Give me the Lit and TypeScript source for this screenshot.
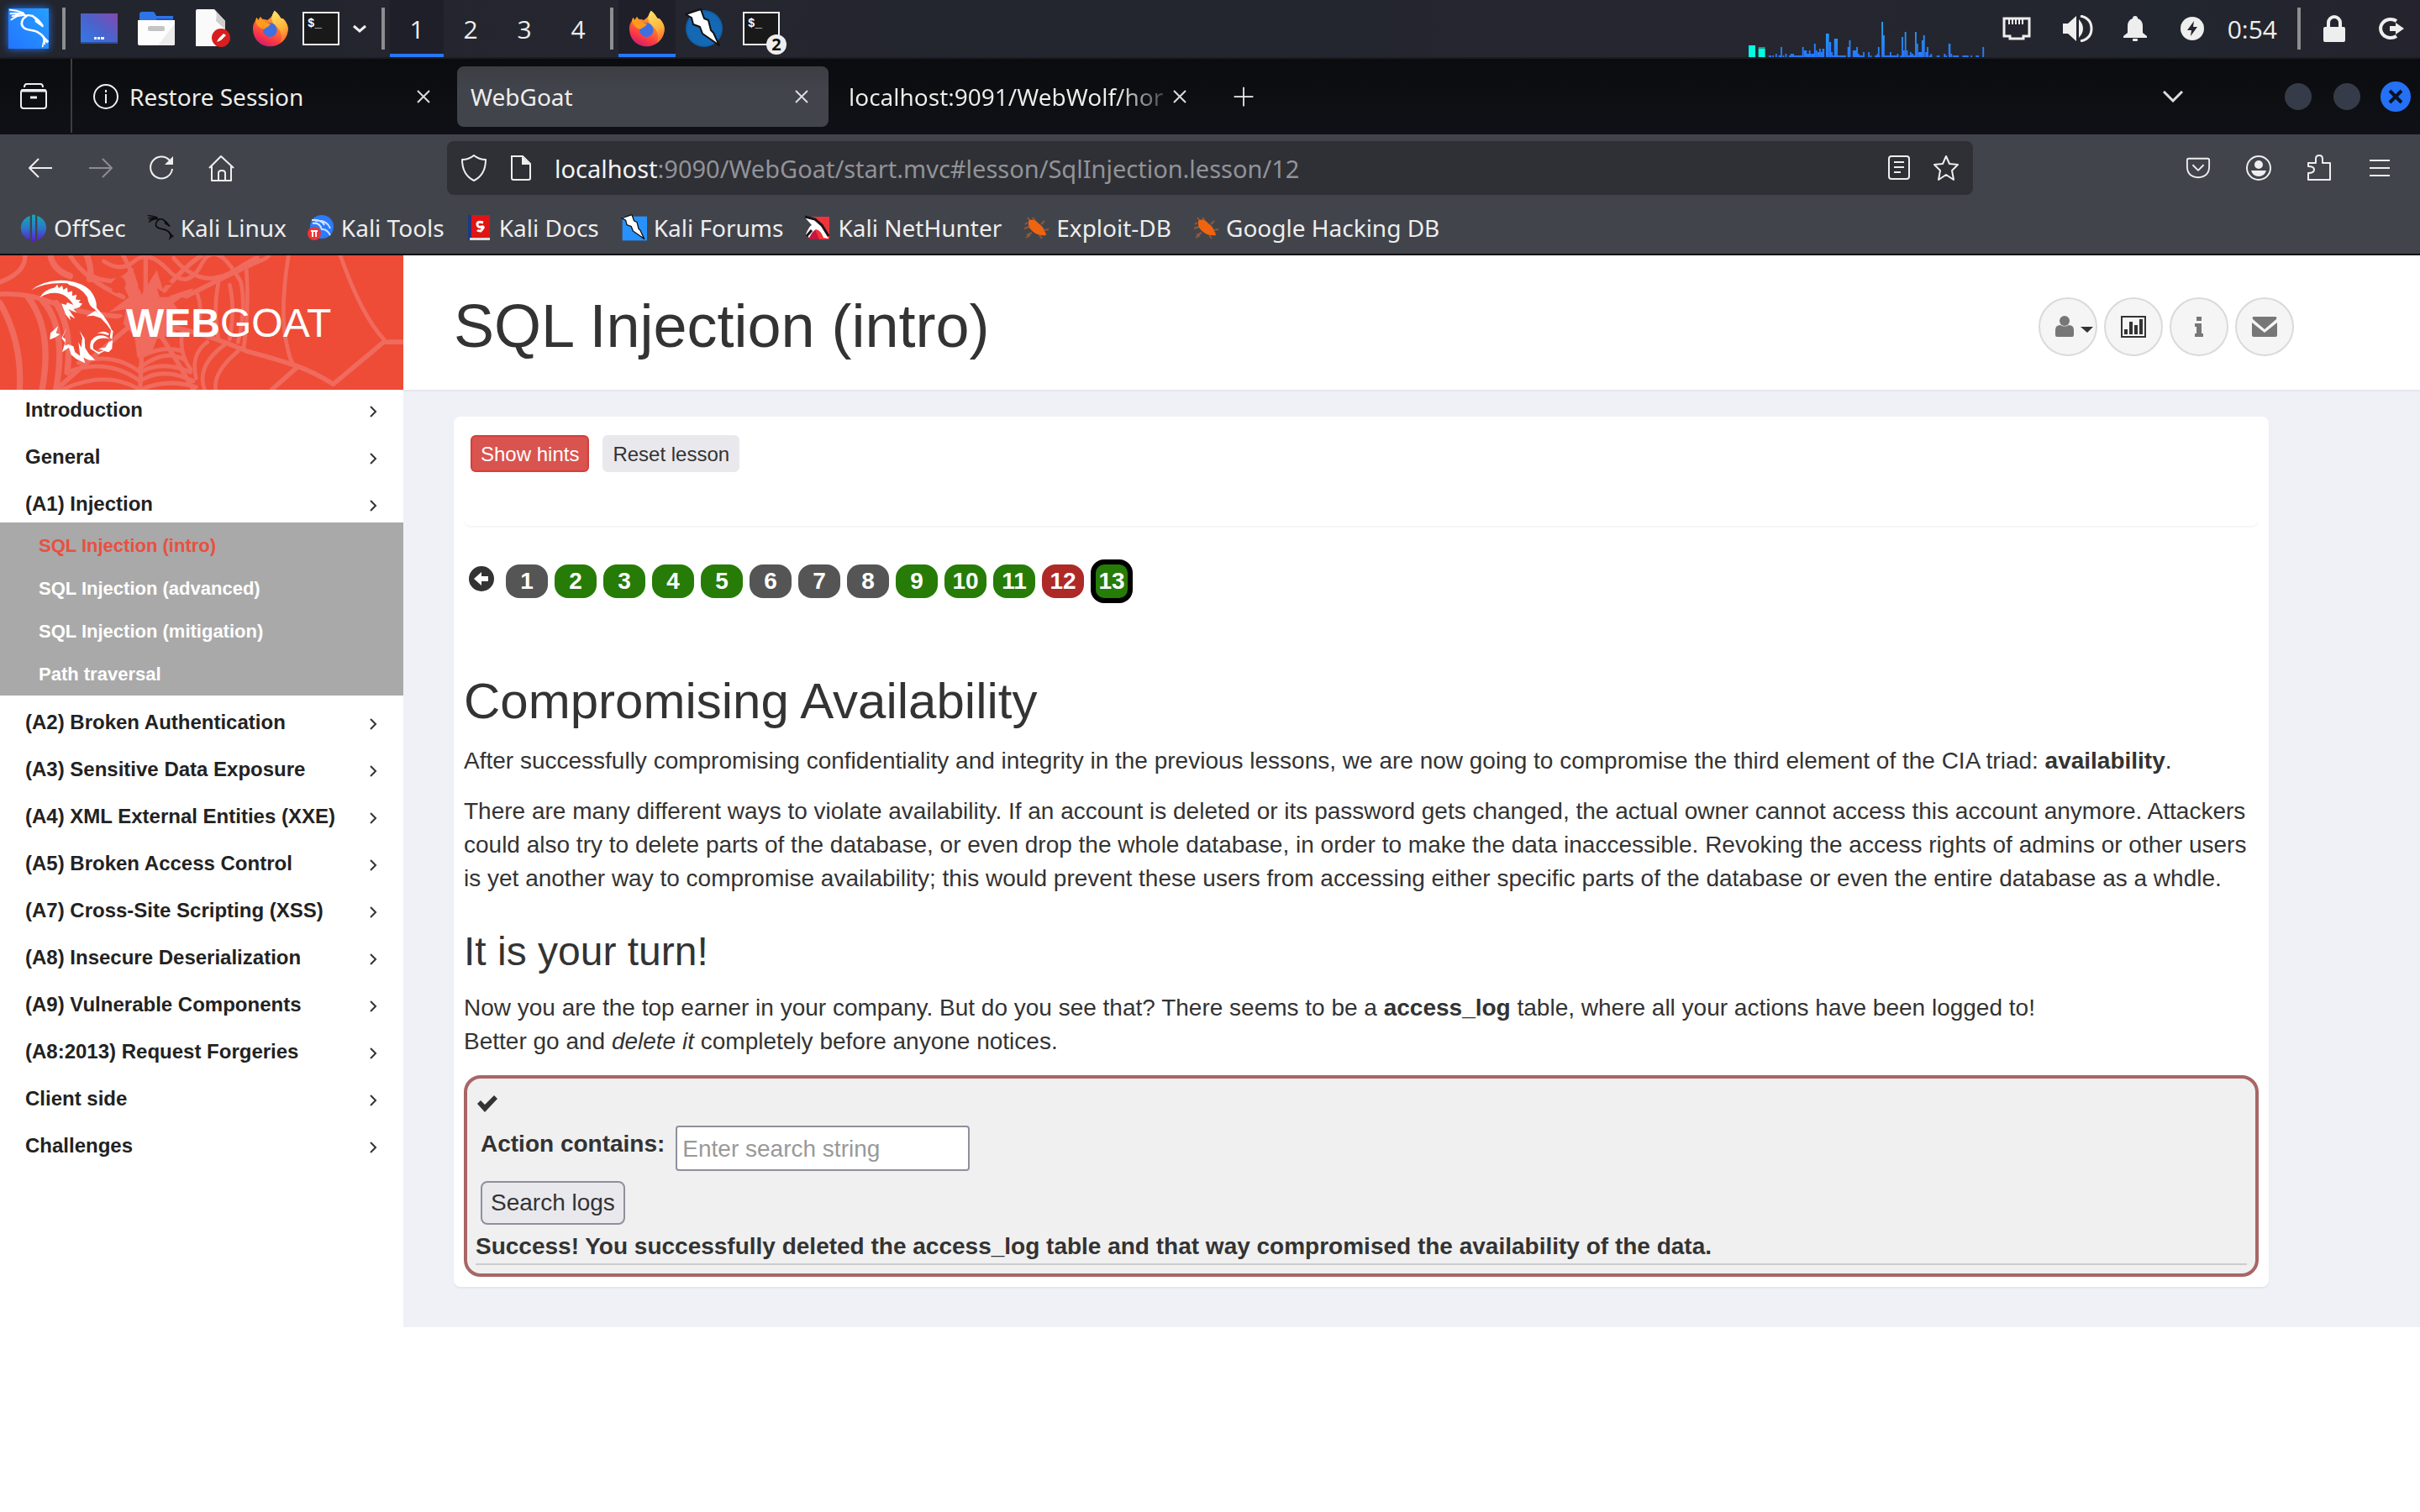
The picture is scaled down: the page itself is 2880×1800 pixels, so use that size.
import { LitElement, html, svg, css, nothing } from "lit";
import { customElement } from "lit/decorators.js";
import { classMap } from "lit/directives/class-map.js";

const dragon = (stroke: string) => svg`
  <g fill="none" stroke=${stroke} stroke-linecap="round" stroke-linejoin="round">
    <path stroke-width="6" d="M36 35 L58 38 L84 46 M38 49 L62 47 L82 50 M40 70 L60 58 L84 54 M44 58 L66 52"/>
    <path stroke-width="7" d="M74 44 L92 56 C110 50 134 62 152 92 M116 56 C124 64 128 68 130 72 C136 78 146 84 152 93 M128 76 L152 93"/>
    <path stroke-width="8" d="M94 58 C78 66 72 86 84 98 C96 110 122 106 136 116 C150 124 156 130 158 140"/>
    <path stroke-width="5" d="M148 124 L172 148 M156 134 L168 152 M158 138 L152 166 M158 138 L160 158"/>
  </g>`;

const flame = svg`
  <g>
    <path fill="url(#ffOuter)" d="M905 104 C904 92 909 80 914 74 L918 62 L924 72 L932 60 L938 68 C946 68 952 70 956 72 C966 66 976 56 982 38 C996 48 1000 58 1006 66 L1012 66 C1024 78 1031 92 1030 106 C1028 142 1000 166 967 166 C934 166 906 142 905 104Z"/>
    <path fill="url(#ffTail)" d="M982 38 C996 48 1000 58 1006 66 L1012 66 C1024 78 1031 92 1030 106 C1029 128 1018 144 1002 154 C1014 130 1004 108 990 96 C978 88 962 66 982 38Z"/>
    <circle cx="966" cy="107" r="25" fill="#3f6fe0"/>
    <path fill="#ff9a1f" d="M914 74 L918 62 L924 72 L932 60 L938 70 C946 78 956 84 968 86 C962 96 952 98 944 104 C930 100 918 92 914 74Z"/>
  </g>`;

const firefoxIcon = svg`
  <svg class="i" viewBox="902 36 132 132" width="44" height="44">
    <defs>
      <linearGradient id="ffOuter" x1="0.8" y1="0" x2="0.3" y2="1">
        <stop offset="0" stop-color="#ffd23c"/><stop offset="0.45" stop-color="#ff7a2a"/>
        <stop offset="0.8" stop-color="#f7324a"/><stop offset="1" stop-color="#c91f6e"/>
      </linearGradient>
      <linearGradient id="ffTail" x1="0.3" y1="0" x2="0.6" y2="1">
        <stop offset="0" stop-color="#ffe066"/><stop offset="0.6" stop-color="#ffb13a"/><stop offset="1" stop-color="#f9662f"/>
      </linearGradient>
    </defs>
    ${flame}
  </svg>`;

const terminalIcon = svg`
  <svg class="i" viewBox="0 0 44 40" width="44" height="40">
    <rect x="1" y="1" width="42" height="38" fill="#191919" stroke="#f4f4f4" stroke-width="2"/>
    <text x="6" y="18" fill="#fff" font-family="Liberation Mono, monospace" font-weight="700" font-size="14">$_</text>
  </svg>`;

const strike = svg`
  <path d="M1 7L19 1L23 12L28 14L31 26L34 29L41 44L21 30L18 22L10 19L8 11Z" fill="#fff" stroke="#111" stroke-width="2" stroke-linejoin="round"/>`;

/* [x, top, width] on a 460 x 126 grid */
const bars: [number, number, number][] = [
  [39, 120, 5], [46, 120, 3], [52, 114, 3], [58, 120, 4], [62, 90, 3], [66, 120, 3], [71, 114, 3], [78, 120, 28],
  [81, 114, 7], [104, 90, 3], [107, 102, 6], [110, 114, 12], [117, 102, 3], [122, 114, 6], [127, 78, 3], [130, 102, 3],
  [133, 108, 4], [137, 96, 3], [140, 108, 4], [143, 96, 4], [150, 42, 6], [156, 72, 4], [160, 108, 3], [166, 60, 7],
  [163, 120, 26], [192, 90, 4], [195, 66, 3], [202, 102, 10], [209, 90, 3], [212, 114, 3], [214, 120, 8], [222, 108, 3],
  [232, 108, 3], [236, 120, 3], [245, 120, 10], [249, 114, 3], [251, 90, 3], [258, 0, 3], [261, 48, 3], [264, 120, 10],
  [274, 108, 3], [277, 120, 14], [288, 114, 3], [294, 120, 4], [297, 54, 3], [300, 102, 3], [303, 36, 3], [306, 102, 3],
  [309, 120, 14], [313, 108, 3], [316, 114, 4], [323, 36, 3], [326, 78, 3], [329, 108, 8], [336, 66, 3], [339, 48, 3],
  [343, 108, 4], [346, 90, 3], [350, 120, 6], [353, 114, 3], [365, 120, 6], [379, 114, 3], [382, 120, 3], [388, 78, 4],
  [392, 114, 3], [396, 120, 12], [415, 120, 12], [431, 120, 3], [441, 120, 6], [454, 90, 3],
];

@customElement("desktop-panel")
class DesktopPanel extends LitElement {
  static styles = css`
    :host { display: block; }
    .panel { display: flex; align-items: center; height: 68px; border-bottom: 2px solid #1c1d20; color: #eeeeec;
      background: linear-gradient(90deg, #22252d, #25262f 25%, #23262e 50%, #262630 70%, #22262e 90%, #25242e);
      font: 30px "Open Sans", "Noto Sans", sans-serif; }
    .cell { display: flex; align-items: center; justify-content: center; width: 68px; height: 68px; padding: 0;
      border: 0; background: none; color: inherit; font: inherit; box-sizing: border-box; position: relative; flex: none; }
    .narrow { width: 52px; }
    .slim { width: 40px; }
    .ws { width: 64px; }
    .on { background: #1e1f28; box-shadow: inset 0 -4px #2777ff; }
    .sep { width: 4px; height: 50px; margin: 0 6px; background: #8d8e90; flex: none; }
    .space { flex: 1; }
    .kali { filter: drop-shadow(0 0 5px #2777ff); }
    .count { position: absolute; left: 40px; top: 41px; width: 24px; height: 24px; border-radius: 12px; background: #eee;
      color: #111; font: 700 20px/24px "Open Sans", sans-serif; text-align: center; }
    .clock { padding: 0 18px 0 8px; flex: none; }
    .graph { align-self: flex-end; flex: none; }
    .net { width: 76px; padding-right: 2px; }
    .i { display: block; }
  `;

  render() {
    return html`<header class="panel">
      <button class="cell" aria-label="Applications">
        <svg class="kali" viewBox="30 30 144 144" width="48" height="48">
          <defs><linearGradient id="kg" x1="0" y1="1" x2="1" y2="0"><stop offset="0" stop-color="#2474ff"/><stop offset="1" stop-color="#25a0ff"/></linearGradient></defs>
          <rect x="30" y="30" width="144" height="144" fill="url(#kg)"/>${dragon("#fff")}
        </svg>
      </button>
      <span class="sep"></span>
      <button class="cell" aria-label="Show desktop">
        <svg class="i" viewBox="0 0 44 36" width="44" height="36">
          <defs><linearGradient id="dg" x1="0" y1="1" x2="1" y2="0"><stop offset="0" stop-color="#2f7bea"/><stop offset="0.5" stop-color="#4a63cc"/><stop offset="1" stop-color="#8448b0"/></linearGradient></defs>
          <rect width="44" height="36" fill="url(#dg)"/><rect y="34" width="44" height="2" fill="#2b4f9c"/>
          <path d="M16 28h3v3h-3zM20 28h3v3h-3zM24 28h4v3h-4z" fill="#f2f2ff"/>
        </svg>
      </button>
      <button class="cell" aria-label="Files">
        <svg class="i" viewBox="0 0 44 40" width="44" height="40">
          <path d="M2 12V3q0-3 3-3H18q2 0 3 3l1 2H42v7z" fill="#2f74e6"/><path d="M22 8H42v2H22z" fill="#1f57b8"/>
          <path d="M0 10H44V38q0 2-2 2H2q-2 0-2-2z" fill="#fdfdfd"/><path d="M44 14V38q0 2-2 2H24z" fill="#ececec"/>
          <rect x="12" y="17" width="20" height="6" rx="2" fill="#c4c4c4"/>
        </svg>
      </button>
      <button class="cell" aria-label="Text editor">
        <svg class="i" viewBox="0 0 42 46" width="42" height="46">
          <path d="M2 0H22L35 14V42q0 2-2 2H0V2q0-2 2-2z" fill="#fafafa"/><path d="M22 0L35 14V24L24 14Q26 4 22 0z" fill="#cfcfcf"/>
          <circle cx="30" cy="34" r="11" fill="#d81e1e"/><path d="M25 39L27 35L33 29L36 31L30 37z" fill="#fff"/>
        </svg>
      </button>
      <button class="cell" aria-label="Firefox">${firefoxIcon}</button>
      <button class="cell narrow" aria-label="Terminal">${terminalIcon}</button>
      <button class="cell slim" aria-label="More launchers">
        <svg class="i" viewBox="0 0 16 10" width="16" height="10"><path d="M1 2L8 8L15 2" fill="none" stroke="#eee" stroke-width="3"/></svg>
      </button>
      <span class="sep"></span>
      ${[1, 2, 3, 4].map((n) => html`<button class=${classMap({ cell: true, ws: true, on: n === 1 })}>${n}</button>`)}
      <span class="sep"></span>
      <button class="cell on" aria-label="Firefox window">${firefoxIcon}</button>
      <button class="cell" aria-label="ZAP window">
        <svg class="i" viewBox="0 0 46 48" width="46" height="48">
          <circle cx="23" cy="24" r="22" fill="#1060a8"/><circle cx="23" cy="24" r="20" fill="#1568b4"/>${strike}
        </svg>
      </button>
      <button class="cell" aria-label="Terminal windows">${terminalIcon}<span class="count">2</span></button>
      <span class="space"></span>
      <svg class="graph" viewBox="0 0 460 126" preserveAspectRatio="none" width="282" height="42">
        <defs><linearGradient id="bg" gradientUnits="userSpaceOnUse" x1="0" y1="0" x2="0" y2="126"><stop offset="0" stop-color="#24a8f0"/><stop offset="1" stop-color="#2777ff"/></linearGradient></defs>
        <rect x="0" y="84" width="13" height="42" fill="#00ffe0"/><rect x="19" y="90" width="13" height="6" fill="#1a9a90"/><rect x="19" y="96" width="13" height="30" fill="#00ffe0"/>
        ${bars.map(([x, y, w]) => svg`<rect x=${x} y=${y} width=${w} height=${126 - y} fill="url(#bg)"/>`)}
      </svg>
      <button class="cell net" aria-label="Network">
        <svg class="i" viewBox="0 0 34 28" width="34" height="28"><path d="M2 2H32V23H25V26H9V23H2z" fill="none" stroke="#eee" stroke-width="3"/><path d="M8 3v6M12 3v6M16 3v6M20 3v6M24 3v6" stroke="#eee" stroke-width="2"/></svg>
      </button>
      <button class="cell" aria-label="Volume">
        <svg class="i" viewBox="0 0 36 32" width="36" height="32"><path d="M0 10H6L16 1V31L6 22H0z" fill="#eee"/><path d="M19 5q10 11 0 22z" fill="#eee"/><path d="M21 1q13 3 13 15t-13 15" fill="none" stroke="#eee" stroke-width="3"/></svg>
      </button>
      <button class="cell" aria-label="Notifications">
        <svg class="i" viewBox="0 0 28 30" width="28" height="30"><path d="M14 0q3 0 3 3q6 2 6 9v8l5 4v2H0v-2l5-4v-8q0-7 6-9q0-3 3-3z" fill="#eee"/><rect x="11" y="27" width="6" height="3" rx="1" fill="#eee"/></svg>
      </button>
      <button class="cell" aria-label="Power">
        <svg class="i" viewBox="0 0 28 28" width="28" height="28"><circle cx="14" cy="14" r="14" fill="#eee"/><path d="M16 5L8 16H13L12 23L20 12H15z" fill="#23262e"/></svg>
      </button>
      <span class="clock">0:54</span>
      <span class="sep"></span>
      <button class="cell" aria-label="Lock">
        <svg class="i" viewBox="0 0 26 32" width="26" height="32"><path d="M6 16V9a7 7 0 0 1 14 0V16" fill="none" stroke="#eee" stroke-width="4"/><rect y="14" width="26" height="18" rx="2" fill="#eee"/></svg>
      </button>
      <button class="cell" aria-label="Log out">
        <svg class="i" viewBox="0 0 30 28" width="30" height="28"><path d="M21 5a12 11 0 1 0 0 18" fill="none" stroke="#eee" stroke-width="4"/><path d="M13 11H20V7L30 14L20 21V17H13z" fill="#eee"/></svg>
      </button>
    </header>`;
  }
}

const closeIcon = svg`<svg class="i" viewBox="0 0 18 16" width="18" height="16"><path d="M2 1L16 15M16 1L2 15" stroke="#ddd" stroke-width="2"/></svg>`;
const bugIcon = svg`
  <svg class="i" viewBox="0 0 32 32" width="32" height="32">
    <path d="M9 8L6 4M15 8L12 4M22 12L26 8M26 19L31 18M8 15L2 17M11 22L5 25M20 25L23 29M9 25L4 28M6 10L3 12" stroke="#8f5a3a" stroke-width="2"/>
    <path d="M8 7q6-2 11 4q6 4 7 9q2 2 2 5q-8 1-14-3q-7-5-7-10q-1-3 1-5z" fill="#ef6410"/>
  </svg>`;

const bookmarks = [
  { name: "OffSec", icon: svg`<svg class="i" viewBox="72 766 96 96" width="32" height="32"><defs><linearGradient id="og" x1="0" y1="0" x2="0" y2="1"><stop offset="0" stop-color="#14aab8"/><stop offset="0.5" stop-color="#2c78c8"/><stop offset="1" stop-color="#5a1fd0"/></linearGradient></defs><path fill="url(#og)" d="M107 772V858C64 844 64 786 107 772ZM133 772V858C176 844 176 786 133 772ZM114 768h12v94h-12z"/></svg>` },
  { name: "Kali Linux", icon: svg`<svg class="i" viewBox="30 28 146 146" width="32" height="32">${dragon("#0c0c0c")}</svg>` },
  { name: "Kali Tools", icon: svg`<svg class="i" viewBox="0 0 32 32" width="32" height="32"><circle cx="17" cy="15" r="14" fill="#2a7bff"/><path d="M5 7q12-1 15 6M6 11q8-2 11 7q6-1 10 7M9 8q14-2 18 9" fill="none" stroke="#cfe3ff" stroke-width="2"/><circle cx="8" cy="23" r="8" fill="#ef3434"/><path d="M4 20h8M6 20v7M10 20v7" stroke="#fff" stroke-width="2"/></svg>` },
  { name: "Kali Docs", icon: svg`<svg class="i" viewBox="0 0 32 32" width="32" height="32"><rect x="3" y="1" width="26" height="30" fill="#e01414"/><rect x="3" y="1" width="4" height="30" fill="#1d3a80"/><rect x="5" y="28" width="24" height="3" fill="#ddd"/><path d="M21 10q-7-2-7 2t5 3t-1 5q-3 0-4-1" fill="none" stroke="#fff" stroke-width="3"/></svg>` },
  { name: "Kali Forums", icon: svg`<svg class="i" viewBox="-2 0 48 48" width="32" height="32"><rect x="2" y="4" width="44" height="43" fill="#2792ff"/>${strike}</svg>` },
  { name: "Kali NetHunter", icon: svg`<svg class="i" viewBox="0 0 32 32" width="32" height="32"><path d="M8 3H30V30H14z" fill="#f2323a"/><path d="M3 22L12 16L18 30H6z" fill="#c01840"/><path d="M1 4L12 7Q24 14 29 29L23 28Q20 19 14 18Q10 20 6 28L2 24Q6 14 9 13z" fill="#fff"/><path d="M1 3L13 6L21 13L29 26M9 19L3 26" fill="none" stroke="#161616" stroke-width="3"/></svg>` },
  { name: "Exploit-DB", icon: bugIcon },
  { name: "Google Hacking DB", icon: bugIcon },
];

@customElement("browser-chrome")
class BrowserChrome extends LitElement {
  static styles = css`
    :host { display: block; color: #eeeeec; font: 28px "Noto Sans", sans-serif; border-bottom: 2px solid #0c0d11; background: #42444c; }
    .i { display: block; flex: none; }
    button { border: 0; padding: 0; background: none; color: inherit; font: inherit; display: flex; align-items: center; justify-content: center; flex: none; }
    .tabs { display: flex; align-items: center; height: 90px; background: linear-gradient(#0b0c0f, #101116); }
    .archive { width: 86px; height: 88px; padding-right: 4px; box-sizing: border-box; border-right: 2px solid #3c3d42; margin-right: 8px; align-self: flex-start; }
    .tab { display: flex; align-items: center; justify-content: space-between; gap: 12px; width: 442px; height: 72px; padding: 0 23px 0 16px; margin-right: 8px; box-sizing: border-box; border-radius: 8px; flex: none; }
    .tight { gap: 4px; }
    .sel { background: linear-gradient(#3c3e43, #42444c 40%); }
    .name { flex: 1; white-space: nowrap; }
    .fade { color: transparent; background: linear-gradient(90deg, #eeeeec 84%, #33343a 100%); -webkit-background-clip: text; background-clip: text; }
    .plus { width: 72px; height: 72px; }
    .space { flex: 1; }
    .wide { width: 60px; height: 72px; }
    .win { width: 58px; height: 72px; }
    .tail { width: 121px; }
    .bar { display: flex; align-items: center; height: 80px; padding: 0 12px; }
    .nav { width: 72px; height: 64px; }
    .url { display: flex; align-items: center; flex: 1; height: 64px; margin: 0 232px; border-radius: 8px; background: #2f3035; padding: 0 16px; box-sizing: border-box; font-size: 29px; min-width: 0; }
    .cell { width: 32px; height: 32px; margin-right: 24px; }
    .addr { flex: 1; display: flex; color: #929398; min-width: 0; }
    .addr b { font-weight: 400; color: #f4f4f4; }
    .marks { display: flex; align-items: center; gap: 25px; height: 62px; padding: 0 24px; }
    .mark { display: flex; align-items: center; gap: 8px; color: inherit; text-decoration: none; white-space: nowrap; }
  `;

  private line(d: string, w = 32, color = "#eee") {
    return svg`<svg class="i" viewBox="0 0 32 32" width=${w} height=${w}><path d=${d} fill="none" stroke=${color} stroke-width="2" stroke-linejoin="round"/></svg>`;
  }

  render() {
    return html`
      <div class="tabs">
        <button class="archive" aria-label="Recent browsing"><svg class="i" viewBox="0 0 32 32" width="32" height="32"><path d="M5 6q0-4 3-4H24q3 0 3 4M4 9H28q3 0 3 3V28q0 3-3 3H4q-3 0-3-3V12q0-3 3-3" fill="none" stroke="#eee" stroke-width="2"/><path d="M1 10H31M12 18h8" stroke="#eee" stroke-width="3"/></svg></button>
        <div class="tab">
          <svg class="i" viewBox="0 0 32 32" width="32" height="32"><circle cx="16" cy="16" r="14" fill="none" stroke="#eee" stroke-width="2"/><path d="M16 13v11M16 8v3" stroke="#eee" stroke-width="2"/></svg>
          <span class="name">Restore Session</span><button aria-label="Close Restore Session">${closeIcon}</button>
        </div>
        <div class="tab sel"><span class="name">WebGoat</span><button aria-label="Close WebGoat">${closeIcon}</button></div>
        <div class="tab tight"><span class="name fade">localhost:9091/WebWolf/hor</span><button aria-label="Close WebWolf">${closeIcon}</button></div>
        <button class="plus" aria-label="New tab">${this.line("M16 3V29M3 16H29", 28)}</button>
        <span class="space"></span>
        <button class="tail" aria-label="List tabs"><svg class="i" viewBox="0 0 24 14" width="24" height="14"><path d="M1 1L12 12L23 1" fill="none" stroke="#ddd" stroke-width="3"/></svg></button>
        <span class="wide"></span>
        <button class="win" aria-label="Minimize"><svg class="i" viewBox="0 0 36 36" width="36" height="36"><circle cx="18" cy="18" r="16" fill="#363b49"/></svg></button>
        <button class="win" aria-label="Maximize"><svg class="i" viewBox="0 0 36 36" width="36" height="36"><circle cx="18" cy="18" r="16" fill="#363b49"/></svg></button>
        <button class="win" aria-label="Close"><svg class="i" viewBox="0 0 36 36" width="36" height="36"><circle cx="18" cy="18" r="18" fill="#2571f5"/><path d="M11 11L25 25M25 11L11 25" stroke="#0b1226" stroke-width="4"/></svg></button>
      </div>
      <div class="bar">
        <button class="nav" aria-label="Back">${this.line("M3 16H30M14 5L3 16L14 27")}</button>
        <button class="nav" aria-label="Forward">${this.line("M2 16H29M18 5L29 16L18 27", 32, "#8c8d92")}</button>
        <button class="nav" aria-label="Reload"><svg class="i" viewBox="0 0 32 32" width="32" height="32"><path d="M26 7A13 13 0 1 0 29 17" fill="none" stroke="#eee" stroke-width="2"/><path d="M30 2V12H20z" fill="#eee"/></svg></button>
        <button class="nav" aria-label="Home">${this.line("M1 16L15 2L30 16M4 14V31H27V14M12 31V22q0-3 4-3t4 3V31")}</button>
        <div class="url">
          <button class="cell" aria-label="Tracking protection">${this.line("M16 1Q22 6 30 6Q30 24 16 31Q2 24 2 6Q10 6 16 1z")}</button>
          <button class="cell" aria-label="Site information"><svg class="i" viewBox="0 0 32 32" width="32" height="32"><path d="M5 2H18L27 11V28q0 2-2 2H7q-2 0-2-2z" fill="none" stroke="#eee" stroke-width="2"/><path d="M17 2V12H27z" fill="#eee"/></svg></button>
          <span class="addr"><b>localhost</b>:9090/WebGoat/start.mvc#lesson/SqlInjection.lesson/12</span>
          <button class="cell" aria-label="Reader view">${this.line("M7 2H25q3 0 3 3V26q0 3-3 3H7q-3 0-3-3V5q0-3 3-3M10 9H22M10 15H22M10 21H18")}</button>
          <button aria-label="Bookmark this page">${this.line("M16 2L20 11L30 12L23 19L25 30L16 24L7 30L9 19L2 12L12 11z")}</button>
        </div>
        <button class="nav" aria-label="Pocket">${this.line("M4 4H28q2 0 2 2V14q0 13-14 14q-14-1-14-14V6q0-2 2-2M9 12L16 19L23 12", 30)}</button>
        <button class="nav" aria-label="Account"><svg class="i" viewBox="0 0 32 32" width="32" height="32"><circle cx="16" cy="16" r="14" fill="none" stroke="#eee" stroke-width="2"/><circle cx="16" cy="12" r="5" fill="#eee"/><path d="M7 19H25q-2 7-9 7t-9-7z" fill="#eee"/></svg></button>
        <button class="nav" aria-label="Extensions">${this.line("M3 30V22q7 0 7-4t-7-4V10H12V5q0-4 4-4t4 4V10H29V30z")}</button>
        <button class="nav" aria-label="Menu">${this.line("M4 7H28M4 16H28M4 25H28")}</button>
      </div>
      <nav class="marks">
        ${bookmarks.map((b) => html`<a class="mark" href="#">${b.icon}<span>${b.name}</span></a>`)}
      </nav>`;
  }
}

const lessons: { title: string; items?: string[] }[] = [
  { title: "Introduction" },
  { title: "General" },
  { title: "(A1) Injection", items: ["SQL Injection (intro)", "SQL Injection (advanced)", "SQL Injection (mitigation)", "Path traversal"] },
  { title: "(A2) Broken Authentication" },
  { title: "(A3) Sensitive Data Exposure" },
  { title: "(A4) XML External Entities (XXE)" },
  { title: "(A5) Broken Access Control" },
  { title: "(A7) Cross-Site Scripting (XSS)" },
  { title: "(A8) Insecure Deserialization" },
  { title: "(A9) Vulnerable Components" },
  { title: "(A8:2013) Request Forgeries" },
  { title: "Client side" },
  { title: "Challenges" },
];

@customElement("lesson-menu")
class LessonMenu extends LitElement {
  static styles = css`
    :host { display: block; width: 480px; flex: none; background: #fff; }
    .brand { position: relative; display: flex; align-items: center; height: 160px; padding-left: 150px; box-sizing: border-box;
      background: #ee4c37; color: #fff; font-size: 48px; line-height: 1; text-decoration: none; }
    .art { position: absolute; inset: 0; width: 480px; height: 160px; }
    .word { position: relative; padding-top: 2px; }
    ul { margin: 0; padding: 2px 0 0; list-style: none; }
    .row { display: flex; align-items: center; justify-content: space-between; height: 44px; padding: 0 31px 0 30px;
      color: #222; font-weight: 700; font-size: 24px; text-decoration: none; margin-bottom: 12px; }
    .open { margin-bottom: 0; }
    .sub { background: #a9a9a9; padding: 2px 0 0; margin-bottom: 10px; }
    .leaf { display: block; padding-left: 46px; font-weight: 700; font-size: 22px; line-height: 51px; color: #fff; text-decoration: none; }
    .here { color: #e8503e; }
    .chev { margin-top: 4px; }
  `;

  render() {
    return html`
      <a class="brand" href="#">
        <svg class="art" viewBox="0 11 1440 448" preserveAspectRatio="none">
          <g fill="none" stroke="#f06a5d" stroke-linecap="round">
            <path stroke-width="16" d="M0 140Q100 135 190 170T430 215M0 100Q90 70 90 11M250 11Q300 90 440 150M440 11Q470 60 500 150M520 11L520 150M720 11Q640 60 560 160M900 40Q760 100 620 170M620 250Q760 280 880 330Q1000 360 1060 380T1190 440M510 260L500 459M460 250Q330 350 200 459M560 260Q620 340 690 459M1060 385L970 459M1190 440L1370 300L1440 300"/>
            <path stroke-width="22" d="M100 150Q190 260 150 459M0 170Q80 300 70 459M150 160Q240 250 200 459M200 170Q260 260 240 400M250 80Q190 60 180 11M320 90Q330 60 310 11"/>
            <path stroke-width="14" d="M370 30Q430 70 480 30T600 60T720 40T860 100Q880 180 850 300M330 80Q420 120 470 60M620 20Q720 130 840 60T900 40Q960 20 960 11M700 130Q730 190 700 270M780 100Q760 190 780 290M820 110Q840 180 820 290M880 60Q890 190 870 320M1030 11Q1000 190 1020 290T1060 380M1215 11Q1290 210 1370 290"/>
            <path stroke-width="14" d="M240 400Q380 350 500 430Q580 380 690 430M280 370Q400 330 500 400Q580 360 680 400M500 350Q580 310 650 330M500 385Q590 320 660 360M650 270Q640 340 680 390M740 300Q680 340 700 420M800 310Q700 380 730 459M850 330Q760 400 770 459M220 459Q380 390 500 459Q600 420 700 450"/>
          </g>
          <g fill="#f06a5d">
            <path d="M430 90L480 70L500 150L560 60L590 150L690 120L640 200L600 220L630 270L560 290L540 340L490 350L480 280L440 240L450 190L390 200L460 150Z"/>
          </g>
          <g fill="#ee4c37">
            <path d="M400 100Q440 60 450 110Q430 150 400 130ZM490 80L510 80L495 130ZM560 120L610 150L570 150ZM580 80L620 110L590 110ZM400 230L440 215L420 260ZM620 170L650 150L680 160L640 200Z"/>
          </g>
          <g fill="#fff">
            <path d="M112 127Q150 96 215 94Q290 96 322 128Q346 156 345 186L372 214L366 224L338 190Q316 180 312 150Q290 118 248 110L240 104Q160 100 112 127Z"/>
            <path d="M142 152Q156 126 196 118L204 108L210 120L222 112L226 126L240 118L242 134L258 130L258 146L274 142L270 158L288 160L280 168L294 172L284 184L262 190L274 202L244 190L268 222L248 212L252 228L234 208L220 172L236 176L240 168L262 176Q236 136 196 136Q164 136 142 152Z"/>
            <path d="M308 214L340 196L352 206L372 216Q392 240 398 258L404 264L400 290L392 286L396 260L380 240L360 220L334 212Z"/>
            <path d="M208 246L200 270L214 274L198 284L178 292L180 270ZM238 252L220 286L232 302L222 334L246 318L254 342L272 356L284 362L304 370L298 352L318 360L340 360L318 340L304 320L302 288L284 262L294 286L290 318L280 300L286 346L268 334L262 314L244 308L232 312L234 290L224 284Z"/>
            <path d="M322 322Q318 290 346 280Q370 272 392 290Q360 282 342 296Q328 306 334 324L352 334L370 328L352 322L376 318L388 300L402 294L400 322L388 334L372 330L352 340Z"/>
            <path d="M346 272Q370 258 390 272L386 278Q366 268 346 272Z"/>
          </g>
        </svg>
        <span class="word"><b>WEB</b>GOAT</span>
      </a>
      <nav><ul>
        ${lessons.map((l) => html`<li>
          <a class=${classMap({ row: true, open: !!l.items })} href="#">${l.title}
            <svg class="chev" viewBox="0 0 10 14" width="10" height="14"><path d="M2 1L8 7L2 13" fill="none" stroke="#333" stroke-width="2"/></svg></a>
          ${l.items ? html`<div class="sub">${l.items.map((t, i) => html`<a class=${classMap({ leaf: true, here: i === 0 })} href="#">${t}</a>`)}</div>` : nothing}
        </li>`)}
      </ul></nav>`;
  }
}

const solved = new Set([2, 3, 4, 5, 9, 10, 11, 13]);

@customElement("lesson-page")
class LessonPage extends LitElement {
  static styles = css`
    :host { display: block; flex: 1; min-width: 0; color: #333; background: #f0f1f7; }
    .top { display: flex; align-items: center; gap: 8px; height: 160px; padding: 10px 150px 0 60px; box-sizing: border-box; background: #fff; }
    .edge { height: 2px; background: #e6e7ed; }
    h1 { flex: 1; margin: 0; font-size: 72px; font-weight: 400; line-height: 80px; padding-bottom: 2px; }
    .round { display: flex; align-items: center; justify-content: center; width: 70px; height: 70px; padding: 0; border-radius: 35px; border: 2px solid #dadada; background: #f5f5f5; }
    .round svg { flex: none; }
    .card { width: 90%; box-sizing: border-box; margin: 30px 0 48px 60px; padding: 12px; background: #fff; border-radius: 8px; box-shadow: 0 2px 2px rgba(0, 0, 0, 0.05); }
    .wrap { display: flow-root; }
    .tools { display: flex; gap: 16px; padding: 10px 8px 64px; border-radius: 8px; box-shadow: 0 2px 1px rgba(0, 0, 0, 0.04); }
    .small { height: 44px; padding: 2px 10px 0; border: 2px solid #e9e9ed; border-radius: 6px; background: #e9e9ed; color: #333; font: 24px "Liberation Sans", Arial, sans-serif; }
    .danger { background: #d9534f; border-color: #d43f3a; color: #fff; }
    .pages { display: flex; align-items: center; gap: 8px; margin-top: 40px; padding-left: 6px; height: 52px; }
    .prev { border: 0; padding: 0 6px 6px 0; background: none; }
    .prev svg { display: block; }
    .badge { width: 50px; height: 40px; border-radius: 16px; background: #555; color: #fff; font-weight: 700; font-size: 28px; line-height: 40px; text-align: center; text-decoration: none; box-sizing: border-box; }
    .done { background: #267c06; }
    .failed { background: #ad2a27; }
    .now { height: 52px; border: 6px solid #000; display: flex; justify-content: center; }
    h2 { margin: 84px 0 18px; font-size: 60px; font-weight: 400; line-height: 66px; }
    h3 { margin: 40px 0 20px; font-size: 48px; font-weight: 400; line-height: 54px; }
    p { margin: 0 0 20px; font-size: 28px; line-height: 40px; }
    .attack { border: 4px solid #a96567; border-radius: 20px; background: #f0f0f0; padding: 10px; font-size: 28px; line-height: 40px; }
    .tick { display: flex; align-items: center; height: 40px; padding-left: 2px; }
    .form { display: grid; gap: 12px; padding: 6px 6px 0; justify-items: start; }
    .field { display: flex; align-items: flex-start; gap: 13px; }
    label { font-weight: 700; padding-top: 2px; }
    input { width: 350px; height: 54px; box-sizing: border-box; padding: 2px 6px 0; border: 2px solid #8f8f9d; border-radius: 4px; background: #fff; color: #333; font: 28px "Liberation Sans", Arial, sans-serif; }
    input::placeholder { color: #999; opacity: 1; }
    .go { height: 52px; padding: 0 10px; border: 2px solid #8f8f9d; border-radius: 8px; background: #e9e9ed; color: #333; font: 28px "Liberation Sans", Arial, sans-serif; }
    .result { margin-top: 6px; font-weight: 700; border-bottom: 2px solid #ccc; }
  `;

  render() {
    return html`
      <div class="top">
        <h1>SQL Injection (intro)</h1>
        <button class="round" aria-label="User">
          <svg viewBox="-12 0 60 28" width="60" height="28"><circle cx="14" cy="7" r="6" fill="#777"/><path d="M3 24V18q0-6 6-6q5 3 10 0q6 0 6 6v6q0 2-2 2H5q-2 0-2-2z" fill="#777"/><path d="M33 14H48L41 21z" fill="#333"/></svg>
        </button>
        <button class="round" aria-label="Report card">
          <svg viewBox="0 0 30 26" width="30" height="26"><rect x="1" y="1" width="28" height="24" fill="none" stroke="#333" stroke-width="2"/><path d="M4 16H8V22H4zM10 7H14V22H10zM16 11H20V22H16zM22 4H26V22H22z" fill="#333"/></svg>
        </button>
        <button class="round" aria-label="About">
          <svg viewBox="0 0 10 24" width="10" height="24"><path d="M2 0H8V5H2zM0 8H8V20H10V24H0V20H2V12H0z" fill="#777"/></svg>
        </button>
        <button class="round" aria-label="Contact">
          <svg viewBox="0 0 30 24" width="30" height="24"><path d="M2 0H28Q30 0 29 3L15 15L1 3Q0 0 2 0zM0 7L15 19L30 7V22q0 2-2 2H2q-2 0-2-2z" fill="#777"/></svg>
        </button>
      </div>
      <div class="edge"></div>
      <div class="wrap"><main class="card">
        <div class="tools"><button class="small danger">Show hints</button><button class="small">Reset lesson</button></div>
        <nav class="pages">
          <button class="prev" aria-label="Previous page"><svg viewBox="0 0 30 30" width="30" height="30"><circle cx="15" cy="15" r="15" fill="#333"/><path d="M6 15L15 7V12H23V18H15V23z" fill="#fff"/></svg></button>
          ${Array.from({ length: 13 }, (_, k) => k + 1).map((n) => html`<a href="#" class=${classMap({ badge: true, done: solved.has(n), failed: n === 12, now: n === 13 })}>${n}</a>`)}
        </nav>
        <h2>Compromising Availability</h2>
        <p>After successfully compromising confidentiality and integrity in the previous lessons, we are now going to compromise the third element of the CIA triad: <b>availability</b>.</p>
        <p>There are many different ways to violate availability. If an account is deleted or its password gets changed, the actual owner cannot access this account anymore. Attackers could also try to delete parts of the database, or even drop the whole database, in order to make the data inaccessible. Revoking the access rights of admins or other users is yet another way to compromise availability; this would prevent these users from accessing either specific parts of the database or even the entire database as a whdle.</p>
        <h3>It is your turn!</h3>
        <p>Now you are the top earner in your company. But do you see that? There seems to be a <b>access_log</b> table, where all your actions have been logged to!<br />Better go and <em>delete it</em> completely before anyone notices.</p>
        <section class="attack">
          <div class="tick"><svg viewBox="0 0 24 20" width="24" height="20"><path d="M0 10L4 6L9 11L20 0L24 4L9 20z" fill="#333"/></svg></div>
          <form class="form" @submit=${(e: Event) => e.preventDefault()}>
            <div class="field"><label for="q">Action contains:</label><input id="q" type="text" placeholder="Enter search string" /></div>
            <button class="go" type="submit">Search logs</button>
          </form>
          <div class="result">Success! You successfully deleted the access_log table and that way compromised the availability of the data.</div>
        </section>
      </main></div>`;
  }
}

@customElement("app-root")
class AppRoot extends LitElement {
  static styles = css`
    :host { display: block; min-height: 100vh; background: #fff; font-family: "Liberation Sans", Arial, sans-serif; }
    .page { display: flex; align-items: flex-start; }
  `;

  render() {
    return html`
      <desktop-panel></desktop-panel>
      <browser-chrome></browser-chrome>
      <div class="page"><lesson-menu></lesson-menu><lesson-page></lesson-page></div>`;
  }
}
